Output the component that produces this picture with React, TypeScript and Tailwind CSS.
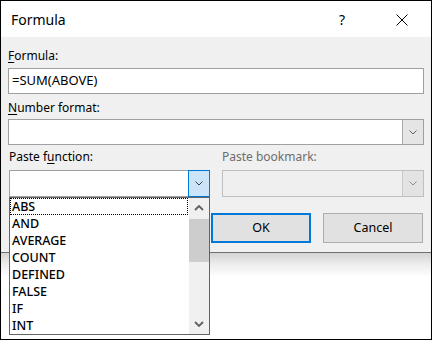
import React from "react";

function ChevronDown({ color = "#606060" }: { color?: string }) {
  return (
    <svg width="8" height="5" viewBox="0 0 8 5" fill="none">
      <polyline points="0.5,0.5 4,4 7.5,0.5" stroke={color} strokeWidth="1" />
    </svg>
  );
}

function ScrollArrow({ up }: { up?: boolean }) {
  return (
    <svg width="10" height="6" viewBox="0 0 10 6" fill="none">
      {up ? (
        <polyline points="1,5 5,1 9,5" stroke="#606060" strokeWidth="1.8" />
      ) : (
        <polyline points="1,1 5,5 9,1" stroke="#606060" strokeWidth="1.8" />
      )}
    </svg>
  );
}

export default function App() {
  const items = ["ABS", "AND", "AVERAGE", "COUNT", "DEFINED", "FALSE", "IF", "INT"];
  return (
    <div className="relative w-[432px] h-[340px] border border-black bg-white overflow-hidden font-['Noto_Sans',sans-serif] text-black">
      {/* Dialog */}
      <div className="flex flex-col border-b border-[#707070]">
        {/* Title bar */}
        <div className="h-[36px] bg-white flex items-center pl-[10px] pr-[23px] pt-[1px]">
          <span className="text-[14px]">Formula</span>
          <div className="ml-auto flex items-center">
            <span className="w-[10px] text-center text-[14px] mr-[49px]">?</span>
            <svg width="12" height="12" viewBox="0 0 12 12" fill="none">
              <line x1="0.5" y1="0.5" x2="11.5" y2="11.5" stroke="#000" strokeWidth="1" />
              <line x1="11.5" y1="0.5" x2="0.5" y2="11.5" stroke="#000" strokeWidth="1" />
            </svg>
          </div>
        </div>
        {/* Body */}
        <div className="bg-[#f0f0f0] px-[7px] pt-[11px] pb-[9px] flex flex-col">
          <div className="h-[16px] leading-[16px] text-[12px]">
            <span className="underline underline-offset-2">F</span>ormula:
          </div>
          <div className="mt-[4px] h-[26px] border border-[#a0a0a0] bg-white flex items-center pl-[3px] text-[13px]">
            =SUM(ABOVE)
          </div>
          <div className="mt-[6px] h-[16px] leading-[16px] text-[12px]">
            <span className="underline underline-offset-2">N</span>umber format:
          </div>
          <div className="mt-[3px] h-[26px] border border-[#a0a0a0] bg-white flex">
            <div className="flex-1" />
            <div className="w-[21px] bg-[#e5e5e5] border-l border-[#adadad] flex items-center justify-center">
              <ChevronDown />
            </div>
          </div>
          <div className="flex mt-[4px] ml-[1px] gap-[12px]">
            <div className="w-[201px] flex flex-col">
              <div className="h-[16px] leading-[16px] text-[12px]">
                Paste f<span className="underline underline-offset-2">u</span>nction:
              </div>
              <div className="mt-[5px] h-[27px] flex border border-[#a0a0a0] bg-white">
                <div className="flex-1" />
                <div className="w-[22px] -my-px -mr-px bg-[#cce4f7] border border-[#0078d7] flex items-center justify-center">
                  <ChevronDown color="#404040" />
                </div>
              </div>
            </div>
            <div className="w-[202px] flex flex-col">
              <div className="h-[16px] leading-[16px] text-[12px] text-[#6d6d6d]">Paste bookmark:</div>
              <div className="mt-[5px] h-[27px] flex border border-[#bfbfbf] bg-[#efefef]">
                <div className="flex-1" />
                <div className="w-[21px] bg-[#e3e3e3] border-l border-[#c8c8c8] flex items-center justify-center">
                  <ChevronDown color="#8a8a8a" />
                </div>
              </div>
            </div>
          </div>
          <div className="mt-[16px] flex justify-end gap-[12px] pr-[1px]">
            <div className="w-[100px] h-[30px] border-2 border-[#0078d7] bg-[#e1e1e1] flex items-center justify-center text-[12.5px]">
              OK
            </div>
            <div className="w-[100px] h-[30px] border border-[#adadad] bg-[#e1e1e1] flex items-center justify-center text-[12.5px]">
              Cancel
            </div>
          </div>
        </div>
      </div>
      {/* Shadow under dialog */}
      <div className="h-[24px] bg-linear-to-b from-[#d4d4d4] via-[#eeeeee] to-white" />

      {/* Drop-down list overlay */}
      <div className="absolute left-[8px] top-[196px] w-[201px] h-[138px] border border-[#646464] bg-white flex">
        <div className="flex-1 flex flex-col">
          {items.map((it, i) => (
            <div
              key={it}
              className={
                i === 0
                  ? "h-[17px] leading-[15px] pl-[1px] mr-[1px] text-[12.5px] font-medium border border-dotted border-black"
                  : "h-[17px] leading-[17px] pl-[2px] text-[12.5px] font-medium"
              }
            >
              {it}
            </div>
          ))}
        </div>
        <div className="w-[20px] bg-[#f0f0f0] flex flex-col">
          <div className="h-[20px] flex items-center justify-center">
            <ScrollArrow up />
          </div>
          <div className="mt-[1px] h-[43px] bg-[#cdcdcd]" />
          <div className="flex-1" />
          <div className="h-[20px] flex items-center justify-center">
            <ScrollArrow />
          </div>
        </div>
      </div>
    </div>
  );
}
